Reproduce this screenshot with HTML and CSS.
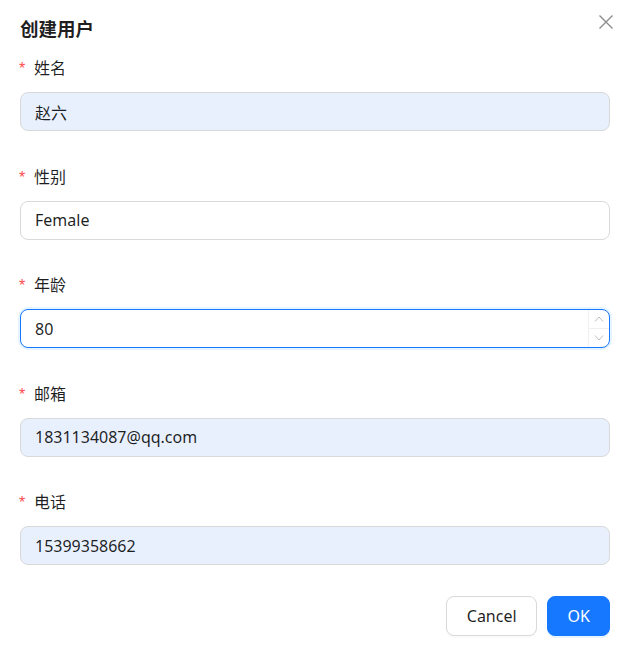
FILE: index.html
```html
<!DOCTYPE html>
<html lang="zh">
<head>
<meta charset="utf-8">
<title>创建用户</title>
<link rel="stylesheet" href="styles.css">
</head>
<body>
<div class="modal">
  <div class="modal-header">
    <div class="modal-title">创建用户</div>
    <button class="modal-close" aria-label="Close">
      <svg width="16" height="16" viewBox="0 0 16 16"><path d="M1.5 1.5 L14.5 14.5 M14.5 1.5 L1.5 14.5" stroke="#8c8c8c" stroke-width="1.4" fill="none"/></svg>
    </button>
  </div>
  <form class="form">
    <div class="form-item">
      <label class="form-label"><span class="req">*</span>姓名</label>
      <div class="input autofill">赵六</div>
    </div>
    <div class="form-item">
      <label class="form-label"><span class="req">*</span>性别</label>
      <div class="input">Female</div>
    </div>
    <div class="form-item">
      <label class="form-label"><span class="req">*</span>年龄</label>
      <div class="input focused">
        <span class="input-value">80</span>
        <span class="spinner">
          <span class="spin-btn"><svg width="10" height="6" viewBox="0 0 10 6"><path d="M1 5.5 L5 1 L9 5.5" stroke="#bfbfbf" stroke-width="1" fill="none"/></svg></span>
          <span class="spin-btn down"><svg width="10" height="6" viewBox="0 0 10 6"><path d="M1 0.5 L5 5 L9 0.5" stroke="#bfbfbf" stroke-width="1" fill="none"/></svg></span>
        </span>
      </div>
    </div>
    <div class="form-item">
      <label class="form-label"><span class="req">*</span>邮箱</label>
      <div class="input autofill">1831134087@qq.com</div>
    </div>
    <div class="form-item">
      <label class="form-label"><span class="req">*</span>电话</label>
      <div class="input autofill">15399358662</div>
    </div>
  </form>
  <div class="modal-footer">
    <button class="btn">Cancel</button>
    <button class="btn primary">OK</button>
  </div>
</div>
</body>
</html>
```

FILE: styles.css
```css
html, body {
  margin: 0;
  padding: 0;
  background: #ffffff;
}
body {
  font-family: "Noto Sans", "Noto Sans CJK SC", sans-serif;
  color: rgba(0, 0, 0, 0.88);
}
.modal {
  padding: 16px 23px 17px 20px;
}
.modal-header {
  display: flex;
  justify-content: space-between;
  align-items: flex-start;
  height: 24px;
}
.modal-title {
  font-family: "Noto Sans CJK SC", sans-serif;
  font-size: 18.5px;
  font-weight: 700;
  line-height: 24px;
}
.modal-close {
  border: 0;
  background: transparent;
  padding: 0;
  margin: -2px -4px 0 0;
  width: 16px;
  height: 16px;
  cursor: pointer;
}
.form {
  margin-top: 16px;
}
.form-item {
  margin-bottom: 33.5px;
}
.form-label {
  display: flex;
  align-items: center;
  height: 24px;
  font-family: "Noto Sans CJK SC", sans-serif;
  font-size: 16px;
  line-height: 24px;
  margin-top: -1px;
  margin-bottom: 13px;
}
.req {
  color: #ff4d4f;
  font-family: "Liberation Sans", sans-serif;
  font-size: 16px;
  width: 15px;
  margin-left: -1px;
  padding-top: 4px;
}
.input {
  box-sizing: border-box;
  height: 39px;
  border: 1px solid #d9d9d9;
  border-radius: 8px;
  padding: 0 14px;
  display: flex;
  align-items: center;
  font-size: 16px;
  background: #ffffff;
  font-family: "Noto Sans", "Noto Sans CJK SC", sans-serif;
}
.input.autofill {
  background: #e8f0fe;
}
.input.focused {
  border-color: #1677ff;
  box-shadow: 0 0 0 2px rgba(5, 145, 255, 0.1);
  padding-right: 0;
  justify-content: space-between;
}
.spinner {
  display: flex;
  flex-direction: column;
  width: 20px;
  height: 100%;
  border-left: 1px solid #f0f0f0;
}
.spin-btn {
  flex: 1;
  display: flex;
  align-items: center;
  justify-content: center;
}
.spin-btn.down {
  border-top: 1px solid #f0f0f0;
}
.modal-footer {
  display: flex;
  justify-content: flex-end;
  gap: 10px;
  margin-top: -3px;
}
.btn {
  box-sizing: border-box;
  height: 40px;
  padding: 0 19px 0 20px;
  border: 1px solid #d9d9d9;
  border-radius: 8px;
  background: #ffffff;
  font-family: "Noto Sans", sans-serif;
  font-size: 16px;
  color: rgba(0, 0, 0, 0.88);
  box-shadow: 0 2px 0 rgba(0, 0, 0, 0.02);
}
.btn.primary {
  background: #1677ff;
  border-color: #1677ff;
  color: #ffffff;
  box-shadow: 0 2px 0 rgba(5, 145, 255, 0.1);
}
```
